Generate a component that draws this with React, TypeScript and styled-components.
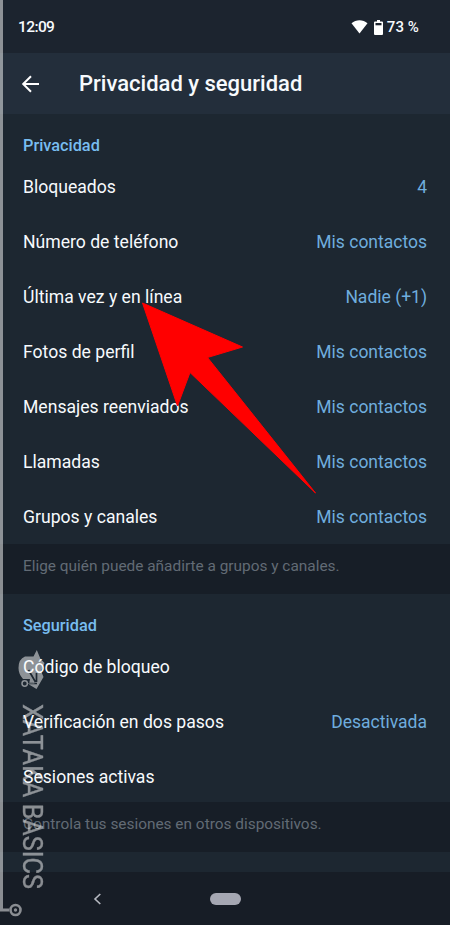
import React from "react";
import styled, { createGlobalStyle } from "styled-components";

const Global = createGlobalStyle`
  * { box-sizing: border-box; }
  body { margin: 0; background: #1d2731; }
`;

const Screen = styled.main`
  position: relative;
  display: flex;
  flex-direction: column;
  width: 450px;
  height: 925px;
  overflow: hidden;
  background: #1d2731;
  color: #f7fafd;
  font-family: Roboto, "Liberation Sans", sans-serif;
`;

const StatusBar = styled.div`
  display: flex;
  align-items: center;
  justify-content: space-between;
  height: 53px;
  flex: none;
  padding: 1px 31px 0 18px;
  background: #1c242f;
  font-size: 15px;
  font-weight: 500;
`;

const Clock = styled.span`
  font-size: 15.5px;
  letter-spacing: -0.6px;
`;

const StatusIcons = styled.div`
  display: flex;
  align-items: center;
  gap: 6px;
`;

const Percent = styled.span`
  margin-left: -2px;
  letter-spacing: 0.1px;
`;

const Header = styled.header`
  display: flex;
  align-items: center;
  height: 61px;
  flex: none;
  padding-left: 21px;
  background: #232e3b;
`;

const Title = styled.h1`
  margin: 0 0 0 39px;
  font-size: 22px;
  line-height: 28px;
  font-weight: 500;
`;

const Section = styled.section<{ $height: number }>`
  height: ${(p) => p.$height}px;
  flex: none;
  padding: 18px 23px 0;
`;

const SectionTitle = styled.h2`
  margin: 0;
  height: 27px;
  line-height: 27px;
  font-size: 16.3px;
  font-weight: 500;
  color: #78bdf0;
`;

const Row = styled.div`
  display: flex;
  align-items: center;
  justify-content: space-between;
  height: 55px;
  font-size: 17.5px;
`;

const Label = styled.span`
  font-size: 17.6px;
`;

const Value = styled.span`
  color: #6fadde;
`;

const Info = styled.p`
  display: flex;
  align-items: center;
  height: 50px;
  flex: none;
  margin: 0;
  padding: 0 23px 6px;
  background: #171e27;
  color: #626b75;
  font-size: 15.4px;
`;

const Gap = styled.div`
  height: 20px;
  flex: none;
`;

const NavBar = styled.nav`
  display: flex;
  align-items: center;
  height: 53px;
  flex: none;
  padding-left: 93px;
  background: #171d26;
`;

const HomePill = styled.span`
  width: 31px;
  height: 12px;
  margin-left: 107px;
  border-radius: 6px;
  background: #a5a7b2;
`;

const Overlay = styled.svg`
  position: absolute;
  inset: 0;
  pointer-events: none;
`;

const privacy = [
  ["Bloqueados", "4"],
  ["Número de teléfono", "Mis contactos"],
  ["Última vez y en línea", "Nadie (+1)"],
  ["Fotos de perfil", "Mis contactos"],
  ["Mensajes reenviados", "Mis contactos"],
  ["Llamadas", "Mis contactos"],
  ["Grupos y canales", "Mis contactos"],
];

const security = [
  ["Código de bloqueo", ""],
  ["Verificación en dos pasos", "Desactivada"],
  ["Sesiones activas", ""],
];

function Rows({ items }: { items: string[][] }) {
  return (
    <>
      {items.map(([label, value]) => (
        <Row key={label}>
          <Label>{label}</Label>
          {value && <Value>{value}</Value>}
        </Row>
      ))}
    </>
  );
}

export default function App() {
  return (
    <Screen>
      <Global />
      <StatusBar>
        <Clock>12:09</Clock>
        <StatusIcons>
          <svg width="17" height="14" viewBox="0 0 17 14">
            <path d="M.5 3.200C5-.700 12-.700 16.500 3.200L8.500 13.600Z" fill="#fff" />
          </svg>
          <svg width="9" height="15" viewBox="0 0 9 15">
            <path d="M3 0h3v1.500h2q1 0 1 1V14q0 1-1 1H1q-1 0-1-1V2.500q0-1 1-1h2Z" fill="#fff" />
            <path d="M1.500 3h6v2.300h-6Z" fill="#1c242f" />
          </svg>
          <Percent>73 %</Percent>
        </StatusIcons>
      </StatusBar>
      <Header>
        <svg width="19" height="18" viewBox="0 0 19 18" fill="none" stroke="#fff" strokeWidth="2">
          <path d="M18 9H2M10 1.200 2.200 9l7.800 7.800" />
        </svg>
        <Title>Privacidad y seguridad</Title>
      </Header>
      <Section $height={430}>
        <SectionTitle>Privacidad</SectionTitle>
        <Rows items={privacy} />
      </Section>
      <Info>Elige quién puede añadirte a grupos y canales.</Info>
      <Section $height={208}>
        <SectionTitle>Seguridad</SectionTitle>
        <Rows items={security} />
      </Section>
      <Info>Controla tus sesiones en otros dispositivos.</Info>
      <Gap />
      <NavBar>
        <svg width="10" height="12" viewBox="0 0 10 12" fill="none" stroke="#b6b9c1" strokeWidth="1.600">
          <path d="M7.300 1 2 6l5.300 5" />
        </svg>
        <HomePill />
      </NavBar>
      <Overlay width="450" height="925" viewBox="0 0 450 925">
        <path
          d="M142.500 303 242.500 347 207.500 357.500 315.500 493 190 372.500 177.500 406Z"
          fill="#f00"
          stroke="#f00"
          strokeWidth="1"
          strokeLinejoin="round"
        />
        <defs>
          <mask id="connector" maskUnits="userSpaceOnUse" x="14" y="646" width="34" height="48">
            <path d="M14 646h34v48H14Z" fill="#fff" />
            <path
              d="M26 683.500h11M35.500 682 28.500 670M36.500 682v-9"
              fill="none"
              stroke="#000"
              strokeWidth="1.700"
            />
            <circle cx="24.700" cy="683.500" r="4.500" fill="#000" />
          </mask>
        </defs>
        <g opacity="0.5">
          <path d="M0 0H3V908.500H9V911.500H0Z" fill="#fff" />
          <circle cx="15.500" cy="910" r="5" fill="none" stroke="#fff" strokeWidth="2.600" />
          <circle cx="15.500" cy="910" r="1.700" fill="#fff" />
          <path
            d="M36.800 650 40.500 659 44.500 663 41 671 43.500 677 36.500 689 29 684.500 30 679 23 679Q18.500 674 18.500 668Q18.500 659 25 656.500L33.500 656.500Z"
            fill="#fff"
            mask="url(#connector)"
          />
          <circle cx="24.700" cy="683.500" r="2.700" fill="none" stroke="#fff" strokeWidth="1.500" />
          <path d="M27.500 683.500h7M34 683 28 673" fill="none" stroke="#fff" strokeWidth=".5" />
          <text
            transform="translate(22.500 704) rotate(90)"
            fill="#fff"
            stroke="#fff"
            strokeWidth=".3"
            fontFamily="Roboto, sans-serif"
            fontSize="27"
            textLength="185"
            lengthAdjust="spacingAndGlyphs"
          >
            XATAKA BASICS
          </text>
        </g>
      </Overlay>
    </Screen>
  );
}
